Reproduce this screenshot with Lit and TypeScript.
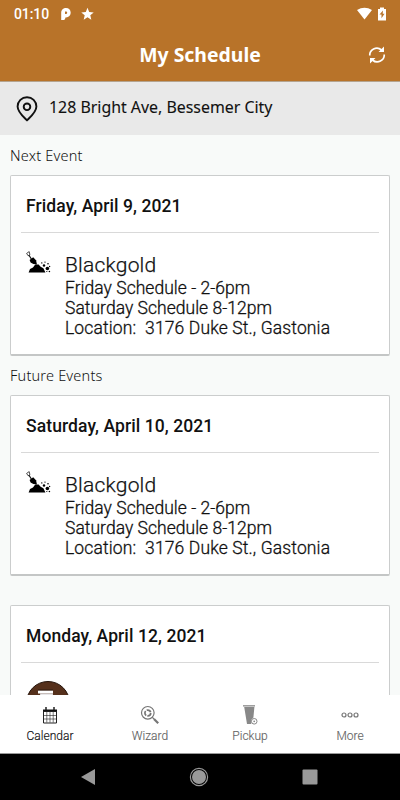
import { LitElement, html, css, svg } from "lit";
import { customElement, property } from "lit/decorators.js";

const shovelIcon = html`<svg width="26" height="24" viewBox="0 0 26 24">
  <path d="M.6 2.400 3.200 .6 3.900 3.800 2.200 4.800Z" fill="none" stroke="#222" stroke-width=".8"/>
  <path d="M2.800 4 6 9" stroke="#111" stroke-width="1.200"/>
  <path d="M3.600 9 7.200 6.200 10 9.200 11 13.400 7.400 13 4.600 11.600Z"/>
  <path d="M2.600 21.500 4 18 7 16.400 9.200 13.600 12.600 13.400 14.600 15.800 17.400 17.200 19.400 21.500Z"/>
  <g><circle cx="15.800" cy="11.900" r=".7"/><circle cx="19" cy="11.100" r=".7"/><circle cx="22" cy="12.700" r=".8"/><circle cx="18" cy="14.500" r="1.200"/><circle cx="21.400" cy="17.500" r="1.800"/><circle cx="23.400" cy="20.500" r=".8"/><circle cx="23.600" cy="15.500" r=".7"/><circle cx="20.800" cy="20.500" r=".6"/></g>
</svg>`;

const binIcon = html`<svg width="44" height="44" viewBox="0 0 44 44">
  <circle cx="22" cy="22" r="21.500" fill="#55301b" stroke="#24130a"/>
  <path d="M12 9.500h15v3H12z" fill="#fff"/><path d="M12 9h15" stroke="#1c120c" stroke-width=".7"/>
  <path d="M14 12.500h13l-1.500 20h-9z" fill="#e8e6e8"/>
</svg>`;

const tabIcons: Record<string, unknown> = {
  Calendar: svg`<path d="M3 4.500h14v2.500H3z" fill="#111"/><g fill="none" stroke="#222"><path d="M3.500 6.500v11.500h13v-11.500z" stroke-width="1"/><path d="M3.500 10.500h13M3.500 14h13M6.800 7v10.500M10 7v10.500M13.200 7v10.500" stroke-width=".6"/><path d="M6 2v3M14 2v3" stroke-width="1.500"/></g>`,
  Wizard: svg`<g fill="none" stroke="#757575"><circle cx="7.800" cy="7.800" r="6.300" stroke-width="1.200"/><circle cx="7.800" cy="8" r="2.900" stroke-width="1.700" stroke-dasharray="4.900 1.170"/><path d="m12.400 12.400 1.600 1.600" stroke-width="1.200"/><path d="m14 14 4.200 4.200" stroke-width="2.200"/></g>`,
  Pickup: svg`<path d="M3 .2h12v1.300H3z" fill="#888"/><path d="M4.200 2h10.200l-1 10.500-2.200 2.500v4H7z" fill="#888"/><circle cx="14.200" cy="16.300" r="2.800" fill="#fff" stroke="#888" stroke-width="1"/><circle cx="14.200" cy="16.300" r=".9" fill="#888"/>`,
  More: svg`<g fill="none" stroke="#757575" stroke-width="1.200"><circle cx="4" cy="10" r="2"/><circle cx="10" cy="10" r="2"/><circle cx="16" cy="10" r="2"/></g>`,
};

@customElement("event-card")
class EventCard extends LitElement {
  @property() date = "";
  @property() kind = "";
  static styles = css`
    :host { display: block; box-sizing: border-box; height: 181px; margin: 0 10px -1px; background: #fff; border: 1px solid #cbcdcd; border-bottom: 2px solid #c4c6c6; border-radius: 2px; font-family: Roboto, sans-serif; color: #111; }
    .date { height: 56px; margin: 0 10px; padding-left: 5px; border-bottom: 1px solid #d9d9d9; font-size: 17.500px; font-weight: 500; letter-spacing: .09px; line-height: 61px; color: #111; white-space: nowrap; }
    .body { display: flex; padding: 18px 15px 0; }
    .icon { width: 39px; height: 44px; }
    svg { display: block; }
    .name { height: 27px; font-size: 21px; font-weight: 300; letter-spacing: .2px; line-height: 29px; -webkit-text-stroke: .25px #111; }
    .line { font-size: 17.500px; font-weight: 300; letter-spacing: .03px; line-height: 20.200px; white-space: pre; -webkit-text-stroke: .3px #111; }
    .place { letter-spacing: .13px; }
    .text { white-space: nowrap; }
  `;
  render() {
    return html`<div class="date">${this.date}</div>
      ${this.kind === "bin"
        ? html`<div class="body"><div class="icon">${binIcon}</div></div>`
        : html`<div class="body"><div class="icon">${shovelIcon}</div>
            <div class="text"><div class="name">Blackgold</div>
              <div class="line">Friday Schedule - 2-6pm</div>
              <div class="line">Saturday Schedule 8-12pm</div>
              <div class="line place">Location:  3176 Duke St., Gastonia</div></div></div>`}`;
  }
}

@customElement("app-root")
class AppRoot extends LitElement {
  static styles = css`
    :host { display: flex; flex-direction: column; width: 400px; height: 800px; overflow: hidden; background: #f8faf9; font-family: "Noto Sans", sans-serif; }
    svg { display: block; }
    header { flex: none; height: 82px; background: #b87329; color: #fff; border-bottom: 1px solid #b5a48f; box-sizing: border-box; }
    .status { display: flex; align-items: center; height: 28px; padding: 0 13px 0 14px; }
    .time { width: 46px; font: 500 14px/28px Roboto, sans-serif; letter-spacing: -.1px; }
    .space { flex: 1; }
    .bar { display: grid; grid-template-columns: 60px 1fr 60px; align-items: center; height: 54px; }
    h1 { grid-column: 2; margin: 0; text-align: center; font-size: 19.400px; line-height: 54px; font-weight: 700; }
    .sync { justify-self: center; padding-left: 13px; }
    .address { flex: none; display: flex; align-items: center; height: 53px; padding-left: 16px; gap: 11px; background: #e9e9e9; color: #111; font: 400 15.900px "Noto Sans", sans-serif; box-sizing: border-box; }
    .address span { padding-bottom: 4px; -webkit-text-stroke: .1px #111; }
    main { flex: 1; min-height: 0; overflow: hidden; }
    .label { height: 40px; padding-left: 10px; font-size: 14.500px; font-weight: 300; letter-spacing: .2px; line-height: 41px; color: #111; }
    .gap { height: 30px; }
    nav { flex: none; display: grid; grid-template-columns: repeat(4, 1fr); height: 58px; background: #fff; border-bottom: 1px solid #999; font: 300 12px/16px Roboto, sans-serif; color: #666; }
    .tab { display: flex; flex-direction: column; align-items: center; padding-top: 10px; gap: 3px; -webkit-text-stroke: .15px currentColor; }
    .on { color: #111; }
    .keys { flex: none; display: flex; justify-content: space-between; align-items: center; height: 46px; padding: 0 82px 0 80px; background: #000; }
  `;
  render() {
    return html`
      <header>
        <div class="status"><span class="time">01:10</span>
          <svg width="36" height="14" viewBox="0 0 36 14" fill="#fff"><path fill-rule="evenodd" d="M1.200 5.800C1.200 2.800 3.400 1 6 1c2.800 0 4.700 2 4.700 4.700S8.800 10.400 6 10.400h-.6c0 1.700-.9 2.600-2.400 2.600H1.200zM5 4.600v2.400h1a1.200 1.200 0 0 0 0-2.400z"/><path d="m27.500.8 1.700 4.200 4.500.4-3.400 2.900 1 4.400-3.800-2.400-3.800 2.400 1-4.400L21.300 5.400l4.500-.4z"/></svg>
          <span class="space"></span>
          <svg width="30" height="14" viewBox="0 0 30 14" fill="#fff"><path d="M0 3Q7.500-1.500 15 3L7.500 12.500z"/><path fill-rule="evenodd" d="M21 2h2V.6h4V2h2v11.400h-8zM26 3.500l-3.500 4h2v3.800l3-4.500h-1.800z"/></svg>
        </div>
        <div class="bar"><h1>My Schedule</h1>
          <svg class="sync" width="18" height="18" viewBox="0 0 18 18" fill="none" stroke="#fff" stroke-width="1.700"><path d="M1.800 9.500C1.300 4 8.500-.6 13.500 4M16.200 8.500C16.700 14 9.500 18.600 4.500 14"/><path d="M16 .5v5.500h-5.500zM2 17.500v-5.500h5.500z" fill="#fff" stroke="none"/></svg>
        </div>
      </header>
      <div class="address">
        <svg width="22" height="26" viewBox="0 0 22 26" fill="none" stroke="#111" stroke-width="1.900"><path d="M11 24.300C7 20.500 1.600 16.200 1.600 10.600a9.400 9.400 0 0 1 18.800 0c0 5.600-5.400 9.900-9.400 13.700z"/><circle cx="11" cy="10.800" r="3.300"/></svg>
        <span>128 Bright Ave, Bessemer City</span>
      </div>
      <main>
        <div class="label">Next Event</div>
        <event-card date="Friday, April 9, 2021"></event-card>
        <div class="label">Future Events</div>
        <event-card date="Saturday, April 10, 2021"></event-card>
        <div class="gap"></div>
        <event-card date="Monday, April 12, 2021" kind="bin"></event-card>
      </main>
      <nav>${Object.keys(tabIcons).map((name, i) => html`<div class="tab ${i === 0 ? "on" : ""}"><svg width="20" height="20" viewBox="0 0 20 20">${tabIcons[name]}</svg><span>${name}</span></div>`)}</nav>
      <div class="keys">
        <svg width="16" height="18" viewBox="0 0 16 18"><path d="M15 1v16L1 9z" fill="#999"/></svg>
        <svg width="20" height="20" viewBox="0 0 20 20"><circle cx="10" cy="10" r="7" fill="#999"/><circle cx="10" cy="10" r="8.600" fill="none" stroke="#999" stroke-width="1.200"/></svg>
        <svg width="16" height="16" viewBox="0 0 16 16"><rect x=".5" y=".5" width="15" height="15" rx="1" fill="#999"/></svg>
      </div>`;
  }
}
